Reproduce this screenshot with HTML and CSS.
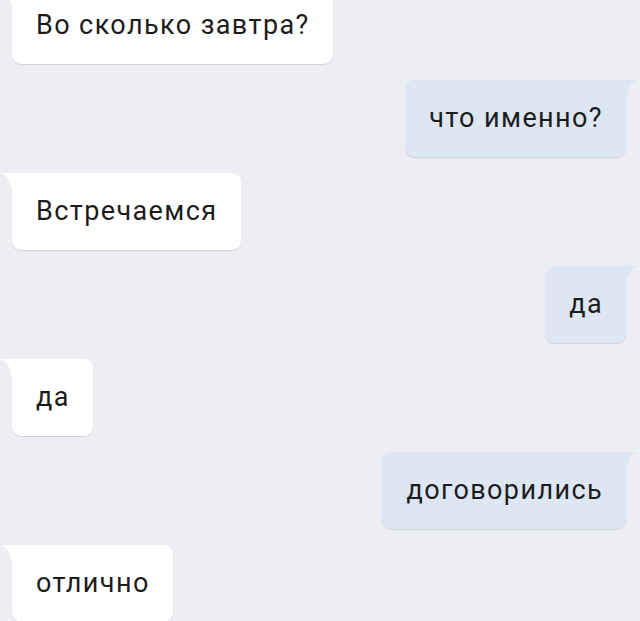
FILE: index.html
```html
<!DOCTYPE html>
<html lang="ru">
<head>
    <meta charset="UTF-8">
    <meta name="viewport" content="width=device-width, initial-scale=1.0">
    <title>Переписка</title>
    <link rel="stylesheet" href="styles.css">
</head>
<body>

<div class="chat">
    <div class="msg in">Во сколько завтра?</div>
    <div class="msg out">что именно?</div>
    <div class="msg in">Встречаемся</div>
    <div class="msg out">да</div>
    <div class="msg in">да</div>
    <div class="msg out">договорились</div>
    <div class="msg in">отлично</div>
</div>

</body>
</html>
```

FILE: styles.css
```css
body {
    margin: 0;
    padding: 0;
    background-color: #eceef4;
    font-family: Roboto, "Noto Sans", sans-serif;
    overflow: hidden;
}

/* Лента сообщений */
.chat {
    display: flex;
    flex-direction: column;
    gap: 16px;
    margin-top: -13px;
}

.msg {
    position: relative;
    padding: 24px 23px 24px 24px;
    line-height: 29px;
    font-size: 27px;
    letter-spacing: 1.4px;
    color: #1c1c1c;
    border-radius: 9px;
    box-shadow: 0 1px 1px rgba(0, 0, 0, 0.12);
}

.msg::before {
    content: "";
    position: absolute;
    top: 0;
    width: 13px;
    height: 22px;
}

/* Входящие */
.msg.in {
    align-self: flex-start;
    margin-left: 12px;
    background-color: #fff;
    border-top-left-radius: 0;
}

.msg.in::before {
    left: -12px;
    background: radial-gradient(ellipse 12px 22px at 0 100%, transparent 98%, #fff 100%);
}

/* Исходящие */
.msg.out {
    align-self: flex-end;
    margin-right: 14px;
    background-color: #dde6f3;
    border-top-right-radius: 0;
}

.msg.out::before {
    right: -13px;
    background: radial-gradient(ellipse 13px 22px at 100% 100%, transparent 98%, #dde6f3 100%);
}
```
